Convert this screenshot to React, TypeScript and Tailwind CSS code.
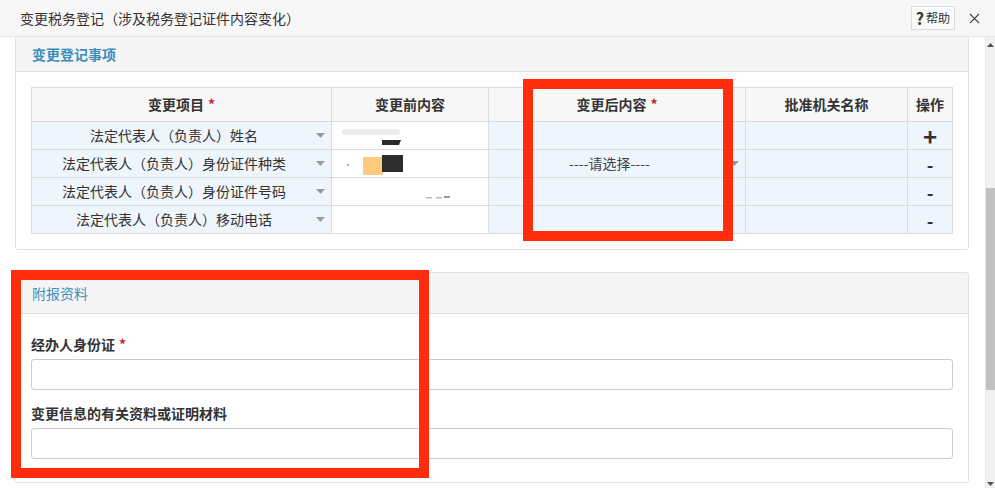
import { X } from 'lucide-react';

const font = "font-['Noto_Sans_CJK_SC','Noto_Sans',sans-serif]";

const rows = [
  { item: '法定代表人（负责人）姓名', after: '', op: '+' },
  { item: '法定代表人（负责人）身份证件种类', after: '----请选择----', op: '-' },
  { item: '法定代表人（负责人）身份证件号码', after: '', op: '-' },
  { item: '法定代表人（负责人）移动电话', after: '', op: '-' },
];

function Caret() {
  return (
    <svg width="9" height="5" viewBox="0 0 9 5" className="shrink-0">
      <path d="M0 0h9L4.5 5z" fill="#9a9a9a" />
    </svg>
  );
}

// redaction smudges in the "before" column
function Smudge({ index }: { index: number }) {
  if (index === 0)
    return (
      <svg width="80" height="24" viewBox="0 0 80 24">
        <rect x="8" y="5" width="58" height="6" rx="3" fill="#ececec" />
        <path d="M48 16h19l-2 5H48z" fill="#2b2b2b" />
      </svg>
    );
  if (index === 1)
    return (
      <svg width="80" height="24" viewBox="0 0 80 24">
        <circle cx="14" cy="13" r="1" fill="#999" />
        <rect x="29" y="5" width="20" height="18" fill="#fccb7d" />
        <path d="M48 3h21v17H48z" fill="#2d2d2d" />
      </svg>
    );
  if (index === 2)
    return (
      <svg width="130" height="24" viewBox="0 0 130 24">
        <rect x="92" y="17" width="6" height="1.5" fill="#bbb" />
        <rect x="102" y="17" width="6" height="1.5" fill="#bbb" />
        <rect x="110" y="16" width="6" height="2" fill="#999" />
      </svg>
    );
  return null;
}

function Star() {
  return <span className="text-[#c0282d] ml-1">*</span>;
}

export default function App() {
  return (
    <div className={`relative w-[995px] h-[488px] overflow-hidden bg-white text-[#333] ${font}`}>
      {/* Title bar */}
      <header className="h-[37px] bg-[#f7f7f7] border-b border-[#e6e6e6] flex items-center pl-[20px] pr-[12px]">
        <span className="text-[14px] text-[#333]">变更税务登记（涉及税务登记证件内容变化）</span>
        <div className="ml-auto flex items-center gap-[11px]">
          <button className="h-[24px] px-[4px] border border-[#dcdcdc] bg-[#fafafa] flex items-center gap-[2px] text-[12px] text-[#333]">
            <span className="text-[16px] font-bold leading-none">?</span>
            <span>帮助</span>
          </button>
          <X className="w-[17px] h-[17px] text-[#444]" strokeWidth={1.6} />
        </div>
      </header>

      <div className="flex h-[451px]">
        {/* Scroll content */}
        <div className="flex-1 pl-[15px] pr-[16px] flex flex-col gap-[22px] border-r border-[#e8e8e8]">
          {/* Panel 1 */}
          <section className="border-x border-b border-[#e3e3e3] rounded-b-[3px]">
            <div className="h-[35px] bg-[#f5f5f5] border-b border-[#e0e0e0] flex items-center pl-[16px]">
              <span className="text-[14px] font-bold text-[#3a8fbf]">变更登记事项</span>
            </div>
            <div className="px-[15px] py-[15px]">
              <div className="grid grid-cols-[300px_157px_257px_162px_45px] border-l border-t border-[#dcdcdc] text-[14px]">
                {[
                  <>变更项目<Star /></>,
                  '变更前内容',
                  <>变更后内容<Star /></>,
                  '批准机关名称',
                  '操作',
                ].map((h, i) => (
                  <div
                    key={i}
                    className="h-[34px] bg-[#f7f7f7] border-r border-b border-[#dcdcdc] flex items-center justify-center font-bold text-[#333]"
                  >
                    {h}
                  </div>
                ))}
                {rows.map((r, i) => (
                  <div key={i} className="contents">
                    <div className="h-[28px] bg-[#eef5fc] border-r border-b border-[#dcdcdc] flex items-center pr-[6px]">
                      <span className="flex-1 text-center">{r.item}</span>
                      <Caret />
                    </div>
                    <div className="h-[28px] bg-white border-r border-b border-[#dcdcdc] flex items-center pl-[2px]">
                      <Smudge index={i} />
                    </div>
                    <div className="h-[28px] bg-[#eef5fc] border-r border-b border-[#dcdcdc] flex items-center pr-[6px]">
                      <span className="flex-1 text-center text-[14px] text-[#444]">{r.after}</span>
                      {r.after && <Caret />}
                    </div>
                    <div className="h-[28px] bg-[#eef5fc] border-r border-b border-[#dcdcdc]" />
                    <div
                      className={`h-[28px] bg-[#eef5fc] border-r border-b border-[#dcdcdc] flex items-center justify-center font-bold leading-none text-[#333] ${
                        r.op === '+' ? 'text-[24px]' : 'text-[18px]'
                      }`}
                    >
                      {r.op}
                    </div>
                  </div>
                ))}
              </div>
            </div>
          </section>

          {/* Panel 2 */}
          <section className="border border-[#e3e3e3] rounded-[3px]">
            <div className="h-[41px] bg-[#f5f5f5] border-b border-[#e0e0e0] flex items-center pl-[16px]">
              <span className="text-[14px] text-[#3a8fbf]">附报资料</span>
            </div>
            <div className="px-[15px] pt-[21px] pb-[23px] flex flex-col">
              <label className="text-[14px] font-bold leading-[18px]">
                经办人身份证<Star />
              </label>
              <input className="mt-[6px] h-[31px] border border-[#cccccc] rounded-[3px] bg-white outline-none" />
              <label className="mt-[14px] text-[14px] font-bold leading-[18px]">变更信息的有关资料或证明材料</label>
              <input className="mt-[6px] h-[31px] border border-[#cccccc] rounded-[3px] bg-white outline-none" />
            </div>
          </section>
        </div>

        {/* Scrollbar */}
        <div className="w-[11px] bg-[#f1f1f1] flex flex-col items-center">
          <svg width="7" height="4" viewBox="0 0 7 4" className="mt-[6px]">
            <path d="M3.5 0L7 4H0z" fill="#505050" />
          </svg>
          <div className="mt-[141px] w-[9px] h-[202px] bg-[#c1c1c1]" />
          <svg width="7" height="4" viewBox="0 0 7 4" className="mt-auto mb-[2px]">
            <path d="M0 0h7L3.5 4z" fill="#505050" />
          </svg>
        </div>
      </div>

      {/* Red annotation boxes */}
      <div className="absolute left-[523px] top-[79px] w-[210px] h-[162px] border-[10px] border-[#ff2d0d] pointer-events-none" />
      <div className="absolute left-[11px] top-[270px] w-[418px] h-[208px] border-[10px] border-[#ff2d0d] pointer-events-none" />
    </div>
  );
}
